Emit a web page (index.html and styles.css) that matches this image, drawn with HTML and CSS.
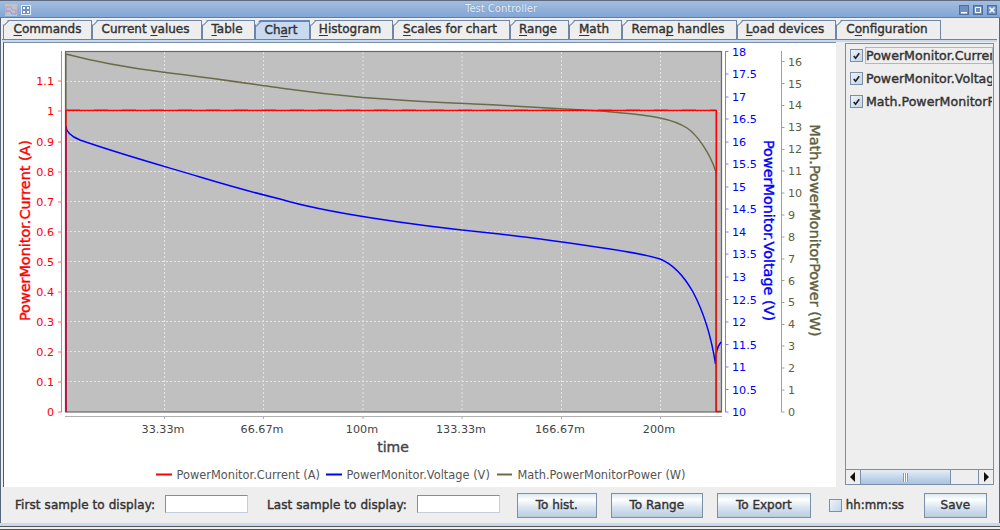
FILE: index.html
```html
<!DOCTYPE html>
<html lang="en">
<head>
<meta charset="utf-8">
<title>Test Controller</title>
<link rel="stylesheet" href="styles.css">
</head>
<body>
<div class="window">
  <header class="titlebar">
    <div class="title-left">
      <svg class="app-icon" viewBox="0 0 12 12"><rect width="12" height="12" fill="#b9c4d4"/><path d="M1 10V3h5l1 3h4v4" fill="none" stroke="#d9908f"/><path d="M1 7h4l2 3h4" fill="none" stroke="#8f90d8"/></svg>
      <svg class="win-icon" viewBox="0 0 10 10"><rect x=".5" y=".5" width="9" height="9" fill="#6d8fc4" stroke="#e6eef8"/><path d="M2 2h2v2H2zM6 2h2v2H6zM2 6h2v2H2zM6 6h2v2H6z" fill="#fff"/></svg>
    </div>
    <span class="title-text">Test Controller</span>
    <div class="title-right">
      <svg class="win-btn" viewBox="0 0 10 10"><rect x=".5" y=".5" width="9" height="9" fill="#6d8fc4" stroke="#4f6f9f"/><path d="M2 7h6v1.5H2z" fill="#fff"/></svg>
      <svg class="win-btn" viewBox="0 0 10 10"><rect x=".5" y=".5" width="9" height="9" fill="#6d8fc4" stroke="#4f6f9f"/><path d="M2.5 2.5h5v5h-5z" fill="none" stroke="#fff"/></svg>
      <svg class="win-btn" viewBox="0 0 10 10"><rect x=".5" y=".5" width="9" height="9" fill="#6d8fc4" stroke="#4f6f9f"/><path d="M2.5 2.5l5 5M7.5 2.5l-5 5" stroke="#fff" stroke-width="1.6"/></svg>
    </div>
  </header>

  <div class="content">
    <nav class="tabs">
      <div class="tab t1"><u>C</u>ommands</div>
      <div class="tab t2">Current <u>v</u>alues</div>
      <div class="tab t3"><u>T</u>able</div>
      <div class="tab t4 active">Ch<u>a</u>rt</div>
      <div class="tab t5"><u>H</u>istogram</div>
      <div class="tab t6"><u>S</u>cales for chart</div>
      <div class="tab t7"><u>R</u>ange</div>
      <div class="tab t8"><u>M</u>ath</div>
      <div class="tab t9">Rema<u>p</u> handles</div>
      <div class="tab t10"><u>L</u>oad devices</div>
      <div class="tab t11">C<u>o</u>nfiguration</div>
    </nav>

    <div class="panel">
      <div class="split">
        <div class="chart">
          <svg class="chart-svg" viewBox="4 43 832 444" width="832" height="444">
            <rect x="65.5" y="51.5" width="656" height="360.5" fill="#c0c0c0"/>
            <g class="grid">
              <path d="M164.5 52V412M263.5 52V412M363 52V412M462 52V412M561.500 52V412M660.500 52V412"/>
              <path d="M66 81.500H721M66 111.500H721M66 141.500H721M66 171.500H721M66 201.500H721M66 231.500H721M66 261.500H721M66 291.500H721M66 321.500H721M66 351.500H721M66 381.500H721"/>
            </g>
            <rect class="plot-frame" x="65.500" y="51.500" width="656" height="360.500"/>

            <path class="line-olive" d="M65.800 412V54C100 63 130 68 164 72.300C200 76.500 260 85.200 280 88C300 90.800 335 95 363 97.500C400 100.300 430 102 470 103.800C480 104.300 490 104.700 500 105.300C520 106.600 560 108.500 600 111C608 111.500 615 112.200 620 112.700C635 114 650 116 659 117.700C670 120 678 122 687 128C697 134.500 710 153 716 172V412"/>
            <path class="line-blue" d="M65.800 412V126C66 132 70 136 80 140C120 154 160 165 200 177C230 186 255 193 280 199C310 208 340 213 372 218C410 224 450 229 490 233C530 237 570 243 610 249C630 252 650 256 660 259C675 265 685 278 693 292C702 309 711 335 715.500 364C716 352 717 347 721 342"/>
            <path class="line-red-noise" d="M66 109.500H716"/>
            <path class="line-red" d="M65.800 412V110.500H716.300V411.500H721"/>
            <path class="line-red-mix" d="M716.300 172V411"/>

            <g class="axis-red">
              <path class="axis-line" d="M61.500 51V412M58 412H61.500M58 382H61.500M58 352H61.500M58 322H61.500M58 292H61.500M58 262H61.500M58 232H61.500M58 202H61.500M58 172H61.500M58 142H61.500M58 111H61.500M58 81H61.500"/>
              <g class="ticks end">
                <text x="54" y="416">0</text><text x="54" y="386">0.1</text><text x="54" y="356">0.2</text><text x="54" y="326">0.3</text><text x="54" y="296">0.4</text><text x="54" y="266">0.5</text><text x="54" y="236">0.6</text><text x="54" y="206">0.7</text><text x="54" y="176">0.8</text><text x="54" y="146">0.9</text><text x="54" y="115">1</text><text x="54" y="85">1.1</text>
              </g>
              <text class="axis-title" transform="translate(30 230.500) rotate(-90)">PowerMonitor.Current (A)</text>
            </g>

            <g class="axis-blue">
              <path class="axis-line" d="M725.500 51V412H728.500M725.500 389.500H728.500M725.500 367H728.500M725.500 344.500H728.500M725.500 322H728.500M725.500 299.500H728.500M725.500 277H728.500M725.500 254H728.500M725.500 232H728.500M725.500 209H728.500M725.500 187H728.500M725.500 164H728.500M725.500 142H728.500M725.500 119H728.500M725.500 97H728.500M725.500 74H728.500M725.500 51.500H728.500"/>
              <g class="ticks">
                <text x="732" y="416">10</text><text x="732" y="394">10.5</text><text x="732" y="371">11</text><text x="732" y="349">11.5</text><text x="732" y="326">12</text><text x="732" y="304">12.5</text><text x="732" y="281">13</text><text x="732" y="258">13.5</text><text x="732" y="236">14</text><text x="732" y="213">14.5</text><text x="732" y="191">15</text><text x="732" y="168">15.5</text><text x="732" y="146">16</text><text x="732" y="123">16.5</text><text x="732" y="101">17</text><text x="732" y="78">17.5</text><text x="732" y="56">18</text>
              </g>
              <text class="axis-title" transform="translate(764 230.500) rotate(90)">PowerMonitor.Voltage (V)</text>
            </g>

            <g class="axis-olive">
              <path class="axis-line" d="M781.500 51V412H784.500M781.500 390H784.500M781.500 368H784.500M781.500 346H784.500M781.500 324.500H784.500M781.500 302.500H784.500M781.500 280.500H784.500M781.500 259H784.500M781.500 237H784.500M781.500 215H784.500M781.500 193H784.500M781.500 171H784.500M781.500 149.500H784.500M781.500 127.500H784.500M781.500 105.500H784.500M781.500 83.500H784.500M781.500 61.500H784.500"/>
              <g class="ticks">
                <text x="788" y="416">0</text><text x="788" y="394">1</text><text x="788" y="372">2</text><text x="788" y="350">3</text><text x="788" y="328">4</text><text x="788" y="306">5</text><text x="788" y="285">6</text><text x="788" y="263">7</text><text x="788" y="241">8</text><text x="788" y="219">9</text><text x="788" y="197">10</text><text x="788" y="175">11</text><text x="788" y="153">12</text><text x="788" y="131">13</text><text x="788" y="109">14</text><text x="788" y="88">15</text><text x="788" y="66">16</text>
              </g>
              <text class="axis-title" transform="translate(810 230.500) rotate(90)">Math.PowerMonitorPower (W)</text>
            </g>

            <g class="axis-x">
              <path class="axis-line" d="M65 416.500H722M164.500 416.500V419M263.500 416.500V419M363 416.500V419M462 416.500V419M561.500 416.500V419M660.500 416.500V419"/>
              <g class="ticks middle">
                <text x="163" y="433">33.33m</text><text x="262" y="433">66.67m</text><text x="362" y="433">100m</text><text x="461" y="433">133.33m</text><text x="560" y="433">166.67m</text><text x="659" y="433">200m</text>
              </g>
              <text class="axis-title middle" x="393" y="452">time</text>
            </g>

            <g class="legend">
              <path class="key-red" d="M156 474.500H172"/><text x="176.500" y="479">PowerMonitor.Current (A)</text>
              <path class="key-blue" d="M326 474.500H342"/><text x="346.500" y="479">PowerMonitor.Voltage (V)</text>
              <path class="key-olive" d="M497 474.500H512"/><text x="517.500" y="479">Math.PowerMonitorPower (W)</text>
            </g>
          </svg>
        </div>
        <div class="splitter"></div>
        <aside class="side">
          <div class="list-box">
            <div class="list">
              <div class="item"><span class="box on"><svg viewBox="0 0 12 12"><path d="M3 6.500L5 9L9 3.500" fill="none" stroke="#222" stroke-width="1.800"/></svg></span><span class="item-text focus">PowerMonitor.Current (A)</span></div>
              <div class="item"><span class="box on"><svg viewBox="0 0 12 12"><path d="M3 6.500L5 9L9 3.500" fill="none" stroke="#222" stroke-width="1.800"/></svg></span><span class="item-text">PowerMonitor.Voltage (V)</span></div>
              <div class="item"><span class="box on"><svg viewBox="0 0 12 12"><path d="M3 6.500L5 9L9 3.500" fill="none" stroke="#222" stroke-width="1.800"/></svg></span><span class="item-text">Math.PowerMonitorPower (W)</span></div>
            </div>
            <div class="scrollbar">
              <div class="sb-btn"><svg viewBox="0 0 8 10"><path d="M6 0V10L1 5Z" fill="#111"/></svg></div>
              <div class="sb-thumb"><span></span></div>
              <div class="sb-track"></div>
              <div class="sb-btn"><svg viewBox="0 0 8 10"><path d="M2 0V10L7 5Z" fill="#111"/></svg></div>
            </div>
          </div>
        </aside>
      </div>
      <div class="toolbar">
        <label class="label">First sample to display:</label>
        <div class="field f1"></div>
        <label class="label l2">Last sample to display:</label>
        <div class="field f2"></div>
        <div class="btn b1">To hist.</div>
        <div class="btn b2">To Range</div>
        <div class="btn b3">To Export</div>
        <div class="check-inline"><span class="box"></span><span class="label hh">hh:mm:ss</span></div>
        <div class="btn b4">Save</div>
      </div>
    </div>
  </div>
  <div class="foot"></div>
</div>
</body>
</html>
```

FILE: styles.css
```css
* { box-sizing: border-box; }
html, body { margin: 0; padding: 0; }
body { width: 1000px; height: 530px; overflow: hidden; background: #eee; font-family: "DejaVu Sans", sans-serif; font-size: 12px; color: #333; }
.window { width: 1000px; height: 530px; display: flex; flex-direction: column; border-left: 1px solid #59657a; border-right: 1px solid #59657a; }

.titlebar { height: 18px; flex: none; margin: 0 -1px; padding: 1px 3px 0 5px; display: flex; align-items: center; justify-content: space-between; position: relative; background: linear-gradient(#a2bee0, #82a6d4); border-top: 1px solid #5e6a80; border-bottom: 1px solid #5d7eb3; }
.title-left, .title-right { display: flex; align-items: center; }
.title-left { gap: 4px; }
.title-right { gap: 4px; }
.app-icon { width: 12px; height: 12px; }
.win-icon { width: 10px; height: 10px; }
.win-btn { width: 10px; height: 10px; }
.title-text { position: absolute; left: 465px; top: 1px; font-size: 10px; line-height: 14px; color: #e9f1fa; text-shadow: 0 0 1px #5d7eb3; }

.content { flex: 1; display: flex; flex-direction: column; min-height: 0; background: #eee; }
.tabs { height: 21px; flex: none; padding: 2px 0 0 2px; display: flex; background: #eee; }
.tab { height: 19px; font-size: 12px; line-height: 17px; text-align: center; color: #333; -webkit-text-stroke: 0.4px #333; background: #eee; border: 1px solid #6e87a8; border-bottom: none; clip-path: polygon(5px 0, 100% 0, 100% 100%, 0 100%, 0 5px); position: relative; }
.tab + .tab { padding-right: 3px; }
.tab::before { content: ""; position: absolute; left: -1px; top: 1px; width: 8px; height: 1px; background: #6e87a8; transform: rotate(-45deg); }
.tab u { text-decoration-thickness: 1px; text-underline-offset: 2px; }
.tab.active { background: #c8daf0; border-color: #6382bf; border-top: 2px solid #6382bf; line-height: 16px; }
.t1 { width: 89px; } .t2 { width: 110px; } .t3 { width: 53px; } .t4 { width: 55px; } .t5 { width: 83px; } .t6 { width: 117px; } .t7 { width: 59px; } .t8 { width: 53px; } .t9 { width: 115px; } .t10 { width: 99px; } .t11 { width: 105px; }

.panel { flex: 1; min-height: 0; display: flex; flex-direction: column; margin: 0 2px 0 1px; border-top: 1px solid #6382bf; padding: 2px 0 0; box-shadow: inset 0 2px 0 #c8daf0; }
.split { height: 445px; flex: none; display: flex; }
.chart { width: 833px; flex: none; margin-left: 1px; background: #fff; border-left: 1px solid #555c69; border-top: 1px solid #7b8fa9; overflow: hidden; }
.chart-svg { display: block; font-family: "DejaVu Sans", sans-serif; }
.grid path { fill: none; stroke: #e4e4e4; stroke-width: 1; stroke-dasharray: 2 2; }
.plot-frame { fill: none; stroke: #686868; stroke-width: 1.200; }
.line-olive { fill: none; stroke: #6b6b47; stroke-width: 1.500; }
.line-blue { fill: none; stroke: #0000ff; stroke-width: 1.500; }
.line-red { fill: none; stroke: #ff0000; stroke-width: 1.600; }
.line-red-mix { fill: none; stroke: rgba(107, 107, 71, .3); stroke-width: 1.600; }
.line-red-noise { fill: none; stroke: rgba(255, 0, 0, .35); stroke-width: 1; stroke-dasharray: 14 14; }
.ticks text { font-size: 11.200px; }
.ticks.end text { text-anchor: end; }
.ticks.middle text { text-anchor: middle; }
.middle { text-anchor: middle; }
.axis-title { font-size: 14.400px; text-anchor: middle; font-weight: 400; stroke-width: .4px; }
.axis-line { fill: none; stroke-width: 1; }
.axis-red .ticks, .axis-red .axis-title { fill: #ff0000; }
.axis-red .axis-title { stroke: #ff0000; }
.axis-red .axis-line { stroke: #ff6a6a; }
.axis-blue .ticks, .axis-blue .axis-title { fill: #0000ff; }
.axis-blue .axis-title { stroke: #0000ff; }
.axis-blue .axis-line { stroke: #7a7aff; }
.axis-olive .ticks, .axis-olive .axis-title { fill: #5f5f3c; }
.axis-olive .axis-title { stroke: #5f5f3c; }
.axis-olive .axis-line { stroke: #a3a38a; }
.axis-x .ticks, .axis-x .axis-title { fill: #444; }
.axis-x .axis-title { stroke: #444; font-size: 14px; }
.axis-x .axis-line { stroke: #b0b0b0; }
.legend text { font-size: 11.400px; fill: #555; }
.legend path { fill: none; stroke-width: 2; }
.key-red { stroke: #ff0000; }
.key-blue { stroke: #0000ff; }
.key-olive { stroke: #6b6b47; }

.toolbar { height: 36px; flex: none; display: flex; align-items: center; padding: 0 0 0 13px; }
.label { font-size: 12px; letter-spacing: .08px; color: #333; -webkit-text-stroke: 0.4px #333; white-space: nowrap; }
.label.hh { font-size: 11.800px; letter-spacing: 0; }
.field { width: 83px; height: 18px; flex: none; margin-bottom: 2px; background: #fff; border: 1px solid #7b8fa9; border-right-color: #c5cfdc; border-bottom-color: #c5cfdc; }
.f1 { margin-left: 10px; }
.l2 { margin-left: 19px; }
.f2 { margin-left: 10px; }
.btn { height: 25px; flex: none; font-size: 12px; line-height: 23px; text-align: center; color: #333; -webkit-text-stroke: 0.4px #333; border: 1px solid #7b8fa9; background: linear-gradient(#dde8f4, #fff 25%, #d7e3f0 60%, #b9cde2); }
.b1 { width: 80px; margin-left: 17px; }
.b2 { width: 92px; margin-left: 14px; }
.b3 { width: 94px; margin-left: 14px; }
.b4 { width: 63px; margin-left: 21px; }
.check-inline { width: 74px; flex: none; display: flex; align-items: center; gap: 4px; margin-left: 18px; }
.box { width: 13px; height: 13px; flex: none; display: block; border: 1px solid #7b8fa9; background: linear-gradient(135deg, #eef3fa, #c3d5e9); }
.box svg { display: block; width: 11px; height: 11px; }

.splitter { width: 9px; flex: none; position: relative; }
.splitter::before { content: ""; position: absolute; left: 3px; top: 2px; bottom: 3px; width: 3px; background-image: radial-gradient(#7d8794 45%, transparent 50%); background-size: 2px 2px; }
.side { width: 149px; flex: none; padding: 1px 0 2px; }
.list-box { height: 100%; border: 1px solid #7b8fa9; display: flex; flex-direction: column; }
.list { flex: 1; min-height: 0; overflow: hidden; padding-top: 0; display: flex; flex-direction: column; }
.item { height: 23px; flex: none; display: flex; align-items: center; padding-left: 4px; gap: 2px; white-space: nowrap; }
.item-text { flex: 1; min-width: 0; height: 17px; line-height: 15px; font-size: 12.600px; color: #333; -webkit-text-stroke: 0.4px #333; border: 1px solid transparent; overflow: hidden; }
.item-text.focus { border-color: #a8b8cc; }
.scrollbar { height: 15px; flex: none; display: flex; border-top: 1px solid #7b8fa9; }
.sb-btn { width: 15px; flex: none; display: flex; align-items: center; justify-content: center; background: #eee; }
.sb-btn:first-child { border-right: 1px solid #7b8fa9; }
.sb-btn:last-child { border-left: 1px solid #7b8fa9; }
.sb-btn svg { width: 8px; height: 10px; }
.sb-thumb { width: 90px; flex: none; display: flex; align-items: center; justify-content: center; border-right: 1px solid #7b8fa9; background: linear-gradient(#e4edf7, #c5d7ec 50%, #a9c3e0); }
.sb-thumb span { width: 5px; height: 9px; background: repeating-linear-gradient(90deg, #7d9bc6 0 1px, #fff 1px 2px); }
.sb-track { flex: 1; background: #eee; }

.foot { height: 7px; flex: none; margin: 0 -1px; background: #eee; border-top: 3px solid #c8daf0; border-bottom: 1px solid #555; box-shadow: inset 0 1px 0 #555; }
```
